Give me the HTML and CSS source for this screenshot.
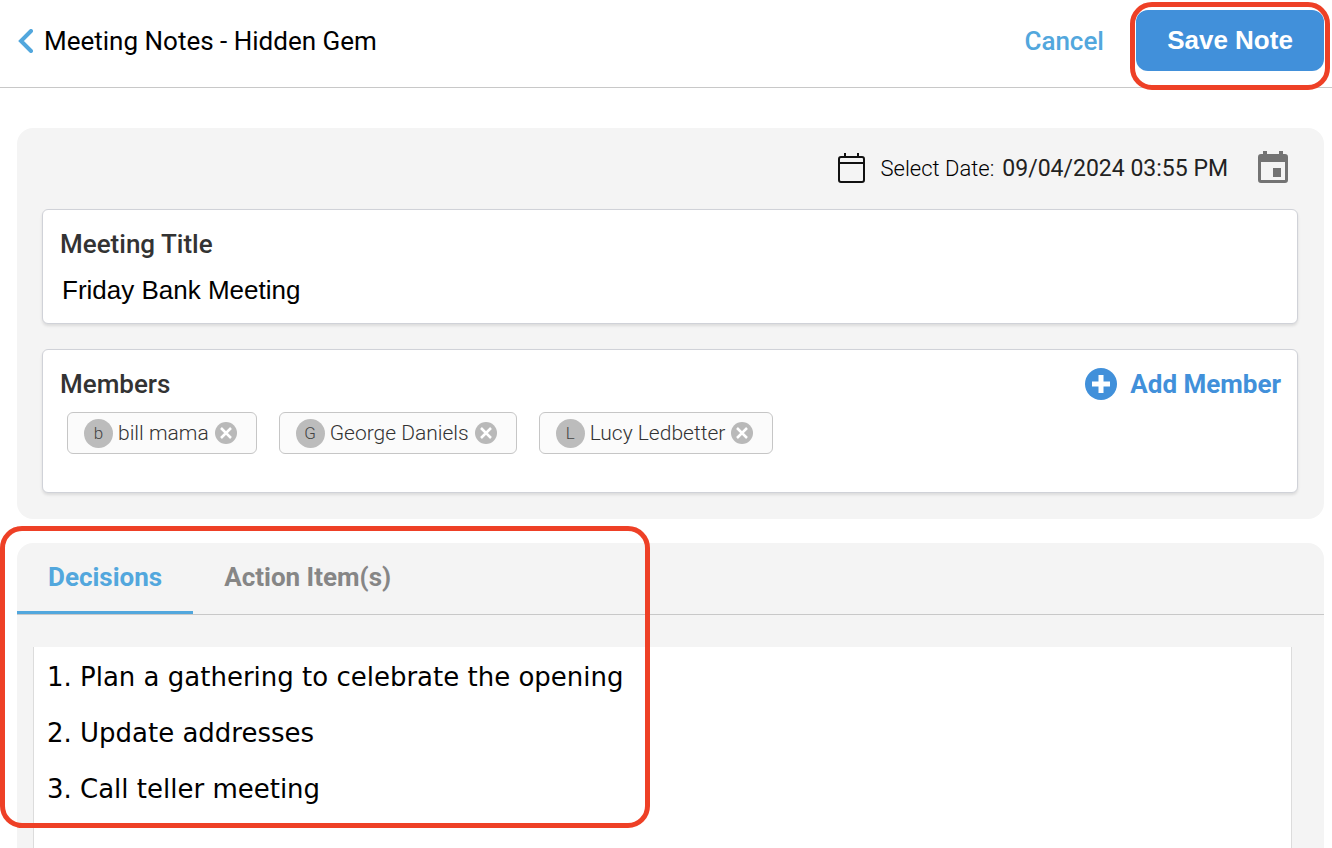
FILE: index.html
```html
<!DOCTYPE html>
<html lang="en">
<head>
  <meta charset="utf-8">
  <title>Meeting Notes - Hidden Gem</title>
  <link rel="stylesheet" href="styles.css">
</head>
<body>
  <header class="topbar">
    <a href="#" class="back" aria-label="Back">
      <svg width="16" height="24" viewBox="0 0 16 24" fill="none" stroke="currentColor" stroke-width="4" stroke-linecap="round">
        <path d="M14 2L4 12l10 10"/>
      </svg>
    </a>
    <h1>Meeting Notes - Hidden Gem</h1>
    <button type="button" class="cancel">Cancel</button>
    <div class="save-wrap">
      <button type="button" class="save">Save Note</button>
    </div>
  </header>

  <main>
    <section class="panel details">
      <div class="date-row">
        <svg width="28" height="32" viewBox="0 0 28 32" fill="none" stroke="#111" stroke-width="2">
          <rect x="1" y="5" width="25" height="25" rx="2"/>
          <path d="M1 11h25M7 1v4M20 1v4"/>
        </svg>
        <span class="date-label">Select Date:</span>
        <time class="date-value" datetime="2024-09-04T15:55">09/04/2024 03:55 PM</time>
        <button type="button" class="date-btn" aria-label="Open calendar">
          <svg width="30" height="36" viewBox="0 0 30 36">
            <path fill="#737373" fill-rule="evenodd" d="M5 1h4v3h12V1h4v3h2a3 3 0 0 1 3 3v23a3 3 0 0 1-3 3H3a3 3 0 0 1-3-3V7a3 3 0 0 1 3-3h2zM3 12v18h24V12z"/>
            <path fill="#737373" d="M15 18h8v9h-8z"/>
          </svg>
        </button>
      </div>

      <div class="card title-card">
        <label for="meeting-title">Meeting Title</label>
        <input type="text" id="meeting-title" value="Friday Bank Meeting">
      </div>

      <div class="card members-card">
        <div class="members-head">
          <h2>Members</h2>
          <button type="button" class="add-member">
            <svg width="32" height="32" viewBox="0 0 32 32">
              <circle cx="16" cy="16" r="16" fill="currentColor"/>
              <path d="M16 7v18M7 16h18" stroke="#fff" stroke-width="5"/>
            </svg>
            Add Member
          </button>
        </div>
        <ul class="chips">
          <li class="chip">
            <span class="avatar">b</span>
            <span>bill mama</span>
            <button type="button" class="remove" aria-label="Remove bill mama">
              <svg width="22" height="22" viewBox="0 0 22 22"><circle cx="11" cy="11" r="11" fill="#b9b9b9"/><path d="M6 6l10 10M16 6L6 16" stroke="#fff" stroke-width="2.5"/></svg>
            </button>
          </li>
          <li class="chip">
            <span class="avatar">G</span>
            <span>George Daniels</span>
            <button type="button" class="remove" aria-label="Remove George Daniels">
              <svg width="22" height="22" viewBox="0 0 22 22"><circle cx="11" cy="11" r="11" fill="#b9b9b9"/><path d="M6 6l10 10M16 6L6 16" stroke="#fff" stroke-width="2.5"/></svg>
            </button>
          </li>
          <li class="chip">
            <span class="avatar">L</span>
            <span>Lucy Ledbetter</span>
            <button type="button" class="remove" aria-label="Remove Lucy Ledbetter">
              <svg width="22" height="22" viewBox="0 0 22 22"><circle cx="11" cy="11" r="11" fill="#b9b9b9"/><path d="M6 6l10 10M16 6L6 16" stroke="#fff" stroke-width="2.5"/></svg>
            </button>
          </li>
        </ul>
      </div>
    </section>

    <section class="panel notes">
      <div class="tabs" role="tablist">
        <button type="button" class="tab active" role="tab" aria-selected="true">Decisions</button>
        <button type="button" class="tab" role="tab" aria-selected="false">Action Item(s)</button>
      </div>
      <div class="editor" contenteditable="true" spellcheck="false">
        <ol>
          <li>Plan a gathering to celebrate the opening</li>
          <li>Update addresses</li>
          <li>Call teller meeting</li>
        </ol>
      </div>
    </section>
  </main>
</body>
</html>
```
FILE: styles.css
```css
*,
*::after {
  box-sizing: border-box;
}

body {
  margin: 0;
  min-height: 100vh;
  display: flex;
  flex-direction: column;
  background: #fff;
  color: #000;
  font-family: Roboto, sans-serif;
  font-size: 26px;
}

button {
  background: none;
  border: none;
  padding: 0;
  font-family: inherit;
  font-size: inherit;
  cursor: pointer;
}

svg {
  display: block;
}

h1,
h2 {
  margin: 0;
  font-size: 26px;
}

.topbar {
  display: flex;
  align-items: center;
  height: 88px;
  padding: 0 8px 6px 17px;
  border-bottom: 1px solid #c8c8c8;
}

.back {
  margin-right: 11px;
  color: #52a7dd;
}

.topbar h1 {
  flex: 1;
  font-weight: 400;
}

.cancel {
  margin-right: 32px;
  color: #52a7dd;
  font-weight: 500;
}

.save-wrap {
  position: relative;
}

.save {
  display: block;
  width: 188px;
  height: 61px;
  border-radius: 12px;
  background: #4190da;
  color: #fff;
  font-family: "Liberation Sans", Arial, sans-serif;
  font-weight: 700;
}

/* red highlight frames */
.save-wrap::after,
.notes::after {
  content: "";
  position: absolute;
  border: 5px solid #ee4026;
  border-radius: 22px;
  pointer-events: none;
}

.save-wrap::after {
  top: -8px;
  right: -6px;
  bottom: -19px;
  left: -6px;
}

.notes::after {
  top: -17px;
  left: -17px;
  width: 650px;
  height: 302px;
}

main {
  flex: 1;
  display: flex;
  flex-direction: column;
  gap: 24px;
  padding: 40px 8px 0 17px;
}

.panel {
  background: #f4f4f4;
  border-radius: 16px;
}

.details {
  padding: 20px 26px 26px 25px;
}

.date-row {
  display: flex;
  align-items: center;
  justify-content: flex-end;
  height: 40px;
  margin-bottom: 21px;
  padding-right: 10px;
  font-size: 23px;
}

.date-label {
  margin: 0 8px 0 15px;
  font-size: 22px;
  font-weight: 300;
}

.date-value {
  color: #222;
}

.date-btn {
  margin-left: 30px;
}

.card {
  background: #fff;
  border: 1px solid #d0d2d8;
  border-radius: 6px;
  box-shadow: 0 2px 3px rgba(0, 0, 0, 0.1);
}

.title-card {
  height: 115px;
  margin-bottom: 25px;
  padding: 16px 17px;
}

.title-card label,
.members-head h2 {
  color: #333;
  font-weight: 500;
  line-height: 36px;
}

.title-card label {
  display: block;
}

.title-card input {
  width: 100%;
  height: 36px;
  margin-top: 10px;
  padding: 0 2px;
  border: none;
  outline: none;
  background: none;
  color: #000;
  font-family: "Liberation Sans", Arial, sans-serif;
  font-size: 26px;
}

.members-card {
  min-height: 144px;
  padding: 16px 16px 16px 17px;
}

.members-head {
  display: flex;
  align-items: center;
  justify-content: space-between;
}

.add-member {
  display: flex;
  align-items: center;
  gap: 13px;
  color: #4190da;
  font-weight: 700;
}

.chips {
  display: flex;
  flex-wrap: wrap;
  gap: 22px;
  margin: 10px 0 0;
  padding: 0 7px;
  list-style: none;
}

.chip {
  display: flex;
  align-items: center;
  height: 42px;
  padding: 0 19px 0 16px;
  border: 1px solid #c6c6c6;
  border-radius: 6px;
  background: #fbfbfb;
  color: #333;
  font-size: 21px;
  font-weight: 300;
}

.avatar {
  width: 29px;
  height: 29px;
  margin-right: 5px;
  border-radius: 50%;
  background: #bcbcbc;
  color: #444;
  font-size: 17px;
  line-height: 29px;
  text-align: center;
}

.remove {
  margin-left: 6px;
}

.notes {
  position: relative;
  flex: 1;
  display: flex;
  flex-direction: column;
  border-radius: 16px 16px 0 0;
}

.tabs {
  display: flex;
  height: 72px;
  border-bottom: 1px solid #c8c8c8;
}

.tab {
  padding: 0 31px;
  border-bottom: 3px solid transparent;
  color: #868686;
  font-weight: 700;
}

.tab.active {
  border-bottom-color: #52a7dd;
  color: #52a7dd;
}

.editor {
  flex: 1;
  margin: 32px 32px 0 16px;
  border: 1px solid #dcdcdc;
  border-width: 0 1px;
  outline: none;
  background: #fff;
  font-family: Verdana, "DejaVu Sans", sans-serif;
  line-height: 56px;
}

.editor ol {
  margin: 0;
  padding: 2px 0 0 46px;
}
```
